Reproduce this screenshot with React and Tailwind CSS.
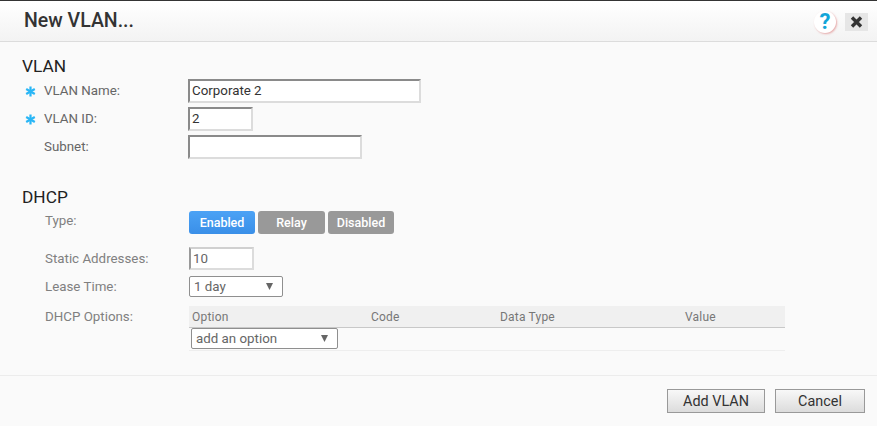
import React from 'react';

const font = "font-['Roboto',sans-serif]";

const Caret = () => (
    <svg width="7" height="7" viewBox="0 0 7 7" className="flex-shrink-0">
        <path d="M0 0H7L3.5 7Z" fill="#666" />
    </svg>
);

const Star = ({ show }) => (
    <span className="w-[44px] flex-shrink-0 pl-[25px] flex items-center">
        {show && (
            <svg width="11" height="11" viewBox="0 0 11 11">
                <g stroke="#29b6f6" strokeWidth="2.2">
                    <path d="M5.5 0.5V10.5" />
                    <path d="M1.2 3L9.8 8" />
                    <path d="M9.8 3L1.2 8" />
                </g>
            </svg>
        )}
    </span>
);

const Input = ({ value, className }) => (
    <div className={`h-[24px] bg-white border-2 border-r-[#dcdcdc] border-b-[#dcdcdc] pl-[2px] text-[13.33px] leading-[20px] ${className}`}>
        {value}
    </div>
);

const Select = ({ label, className }) => (
    <div className={`bg-white border border-[#8f8f8f] rounded-[2px] flex items-center justify-between text-[13.33px] text-[#666] ${className}`}>
        <span className="pt-[1px]">{label}</span>
        <Caret />
    </div>
);

const Pill = ({ label, active, className }) => (
    <div className={`h-[23px] pt-[1px] rounded-[3px] flex items-center justify-center text-[12.5px] font-medium text-white ${active ? 'bg-gradient-to-b from-[#4ba2f5] to-[#3a8fe8]' : 'bg-[#999999]'} ${className}`}>
        {label}
    </div>
);

export default function App() {
    return (
        <div className={`w-[877px] h-[426px] bg-[#fafafa] border-t border-[#333] flex flex-col overflow-hidden ${font}`}>
            {/* Header */}
            <div className="h-[41px] flex-shrink-0 flex items-center justify-between bg-gradient-to-b from-white to-[#f3f3f3] border-b border-[#dcdcdc] pl-[24px] pr-[9px]">
                <h1 className="text-[19.5px] font-medium text-[#333] leading-none">New VLAN...</h1>
                <div className="flex items-center gap-[9px] mt-[2px]">
                    <div className="w-[22px] h-[22px] rounded-full bg-white shadow-[1px_1px_2px_rgba(220,120,120,0.6)] flex items-center justify-center text-[22px] font-bold text-[#12a5d8] leading-none">?</div>
                    <div className="w-[23px] h-[18px] bg-[#e6e6e6] flex items-center justify-center">
                        <svg width="13" height="12" viewBox="0 0 13 12">
                            <path d="M2 1.5L11 10.5M11 1.5L2 10.5" stroke="#333" strokeWidth="3.4" />
                        </svg>
                    </div>
                </div>
            </div>

            {/* VLAN section */}
            <div className="pl-[22px] pt-[13px] flex-shrink-0">
                <h2 className="text-[17.3px] leading-[22px] text-[#222]">VLAN</h2>
                <div className="-ml-[22px] flex flex-col gap-[4px] mt-[2px] text-[13.33px] text-[#666]">
                    <div className="flex items-center">
                        <Star show />
                        <span className="w-[144px]">VLAN Name:</span>
                        <Input value="Corporate 2" className="w-[233px] border-t-[#8a8a8a] border-l-[#8a8a8a] text-[#333]" />
                    </div>
                    <div className="flex items-center">
                        <Star show />
                        <span className="w-[144px]">VLAN ID:</span>
                        <Input value="2" className="w-[65px] border-t-[#8a8a8a] border-l-[#8a8a8a] text-[#333]" />
                    </div>
                    <div className="flex items-center">
                        <Star />
                        <span className="w-[144px]">Subnet:</span>
                        <Input value="" className="w-[174px] border-t-[#8a8a8a] border-l-[#8a8a8a]" />
                    </div>
                </div>
            </div>

            {/* DHCP section */}
            <div className="pl-[22px] pt-[27px] flex-shrink-0">
                <h2 className="text-[17.3px] leading-[22px] text-[#222]">DHCP</h2>
                <div className="-ml-[22px] pl-[45px] text-[13.33px] text-[#808080]">
                    <div className="flex items-start mt-[3px]">
                        <span className="w-[144px] leading-[20px]">Type:</span>
                        <div className="flex gap-[3px]">
                            <Pill label="Enabled" active className="w-[66px]" />
                            <Pill label="Relay" className="w-[67px]" />
                            <Pill label="Disabled" className="w-[66px]" />
                        </div>
                    </div>
                    <div className="flex items-center mt-[13px]">
                        <span className="w-[144px]">Static Addresses:</span>
                        <Input value="10" className="w-[65px] !h-[23px] pl-[1px] border-t-[#d0d0d0] border-l-[#999] text-[#666]" />
                    </div>
                    <div className="flex items-center mt-[6px]">
                        <span className="w-[144px]">Lease Time:</span>
                        <Select label="1 day" className="w-[94px] h-[21px] pl-[4px] pr-[9px]" />
                    </div>
                    <div className="flex items-start mt-[9px]">
                        <span className="w-[144px] leading-[22px]">DHCP Options:</span>
                        <div className="w-[596px]">
                            <div className="h-[22px] bg-[#f0f0f0] border-b border-[#c8c8c8] flex items-center text-[12px] tracking-[0.2px] text-[#777]">
                                <span className="w-[182px] pl-[3px]">Option</span>
                                <span className="w-[129px]">Code</span>
                                <span className="w-[185px]">Data Type</span>
                                <span>Value</span>
                            </div>
                            <div className="h-[23px] border-b border-[#eeeeee] pl-[2px]">
                                <Select label="add an option" className="w-[147px] h-[21px] pl-[4px] pr-[9px]" />
                            </div>
                        </div>
                    </div>
                </div>
            </div>

            {/* Footer */}
            <div className="mt-auto h-[51px] flex-shrink-0 border-t border-[#ececec] flex items-start justify-end gap-[10px] pt-[13px] pr-[12px]">
                <div className="w-[98px] h-[24px] pt-[1px] bg-gradient-to-b from-[#f8f8f8] to-[#dcdcdc] border border-[#999] flex items-center justify-center text-[14.4px] text-[#333]">Add VLAN</div>
                <div className="w-[90px] h-[24px] pt-[1px] bg-gradient-to-b from-[#f8f8f8] to-[#dcdcdc] border border-[#999] flex items-center justify-center text-[14.4px] text-[#333]">Cancel</div>
            </div>
        </div>
    );
}
